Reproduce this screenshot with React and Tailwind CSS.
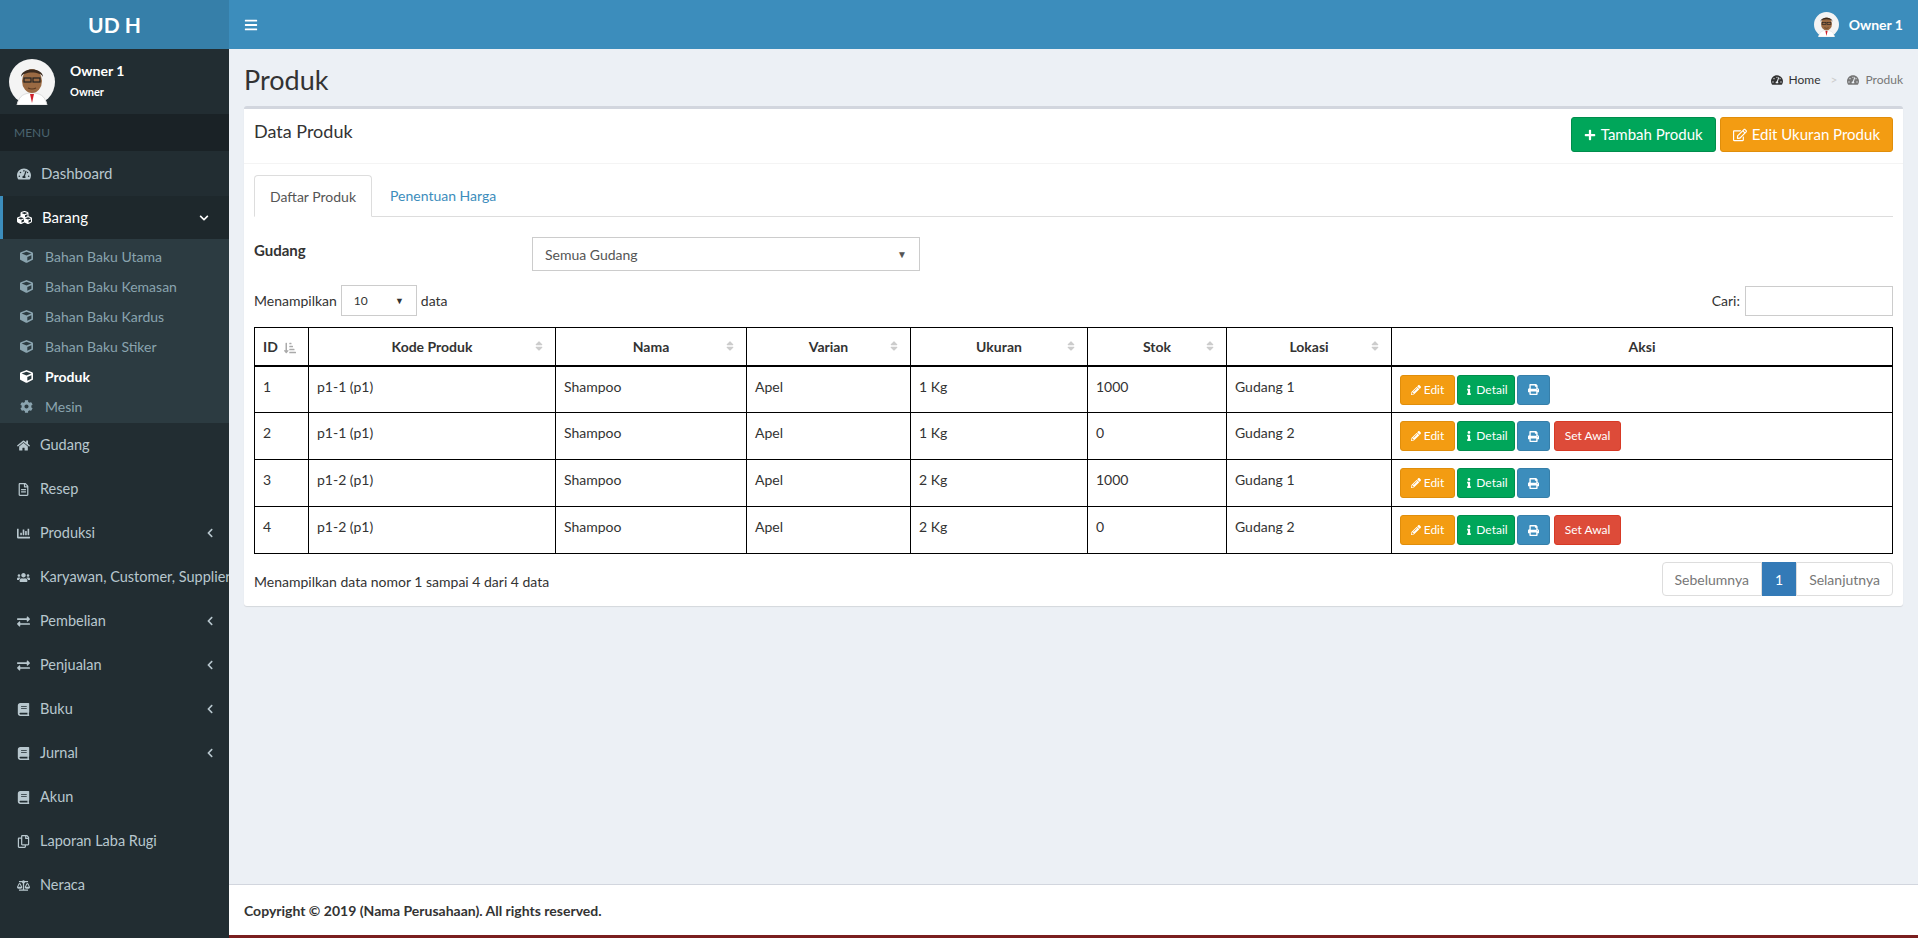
import React from 'react'
import {
  FaTachometerAlt, FaCubes, FaCube, FaCog, FaHome, FaRegFileAlt, FaChartBar, FaUsers,
  FaExchangeAlt, FaBook, FaRegCopy, FaBalanceScale, FaChevronDown, FaChevronLeft,
  FaBars, FaPlus, FaRegEdit, FaPencilAlt, FaInfo, FaPrint, FaSortAmountDownAlt, FaSort,
} from 'react-icons/fa'

function Avatar({ size = 46 }) {
  return (
    <svg width={size} height={size} viewBox="0 0 46 46">
      <circle cx="23" cy="23" r="23" fill="#f4f4f4" />
      <path d="M8 46 C10 36 16 34 23 34 C30 34 36 36 38 46 Z" fill="#fff" stroke="#ddd" />
      <path d="M21 35 L23 44 L25 35 Z" fill="#d0202a" />
      <ellipse cx="23" cy="22" rx="10" ry="12" fill="#9a6a43" />
      <path d="M12 18 C12 8 34 8 34 18 C32 12 14 12 12 18 Z" fill="#3a2a1e" />
      <rect x="15" y="19" width="7" height="4" fill="none" stroke="#222" strokeWidth="1.2" />
      <rect x="24" y="19" width="7" height="4" fill="none" stroke="#222" strokeWidth="1.2" />
      <path d="M19 29 Q23 31 27 29" stroke="#5a3a22" fill="none" strokeWidth="1.2" />
    </svg>
  )
}

const menu = [
  { icon: FaHome, label: 'Gudang' },
  { icon: FaRegFileAlt, label: 'Resep' },
  { icon: FaChartBar, label: 'Produksi', arrow: true },
  { icon: FaUsers, label: 'Karyawan, Customer, Supplier', arrow: true },
  { icon: FaExchangeAlt, label: 'Pembelian', arrow: true },
  { icon: FaExchangeAlt, label: 'Penjualan', arrow: true },
  { icon: FaBook, label: 'Buku', arrow: true },
  { icon: FaBook, label: 'Jurnal', arrow: true },
  { icon: FaBook, label: 'Akun' },
  { icon: FaRegCopy, label: 'Laporan Laba Rugi' },
  { icon: FaBalanceScale, label: 'Neraca' },
]

const sub = ['Bahan Baku Utama', 'Bahan Baku Kemasan', 'Bahan Baku Kardus', 'Bahan Baku Stiker']

const rows = [
  ['1', 'p1-1 (p1)', 'Shampoo', 'Apel', '1 Kg', '1000', 'Gudang 1', false],
  ['2', 'p1-1 (p1)', 'Shampoo', 'Apel', '1 Kg', '0', 'Gudang 2', true],
  ['3', 'p1-2 (p1)', 'Shampoo', 'Apel', '2 Kg', '1000', 'Gudang 1', false],
  ['4', 'p1-2 (p1)', 'Shampoo', 'Apel', '2 Kg', '0', 'Gudang 2', true],
]

const cols = [
  ['ID', 'w-[54px]'], ['Kode Produk', 'w-[247px]'], ['Nama', 'w-[191px]'], ['Varian', 'w-[164px]'],
  ['Ukuran', 'w-[177px]'], ['Stok', 'w-[139px]'], ['Lokasi', 'w-[165px]'],
]

export default function App() {
  return (
    <div className="flex min-h-[938px] w-full text-[#333]" style={{ fontFamily: 'Lato, "Noto Sans", sans-serif' }}>
      {/* Sidebar */}
      <aside className="w-[229px] shrink-0 bg-[#222d32] flex flex-col">
        <div className="h-[49px] bg-[#367fa9] flex items-center justify-center text-white text-[21px] font-bold">UD H</div>
        <div className="h-[65px] flex items-center px-[9px] gap-[15px]">
          <Avatar />
          <div className="text-white font-bold">
            <div className="text-[14px] leading-[18px]">Owner 1</div>
            <div className="text-[11px] mt-[4px]">Owner</div>
          </div>
        </div>
        <div className="h-[37px] bg-[#1a2226] text-[#4b646f] text-[12px] flex items-center px-[14px]">MENU</div>
        <div className="h-[45px] flex items-center gap-[10px] px-[17px] text-[#b8c7ce] text-[15px]">
          <FaTachometerAlt className="text-[14px]" /> Dashboard
        </div>
        <div className="h-[43px] flex items-center gap-[10px] pl-[14px] pr-[20px] text-white text-[15px] bg-[#1e282c] border-l-[3px] border-[#3c8dbc]">
          <FaCubes className="text-[15px]" /> <span className="flex-1">Barang</span>
          <FaChevronDown className="text-[10px]" />
        </div>
        <div className="bg-[#2c3b41] py-[2px]">
          {sub.map(s => (
            <div key={s} className="h-[30px] flex items-center gap-[12px] px-[20px] text-[#8aa4af] text-[14px]">
              <FaCube className="text-[13px]" /> {s}
            </div>
          ))}
          <div className="h-[30px] flex items-center gap-[12px] px-[20px] text-white font-bold text-[14px]">
            <FaCube className="text-[13px]" /> Produk
          </div>
          <div className="h-[30px] flex items-center gap-[12px] px-[20px] text-[#8aa4af] text-[14px]">
            <FaCog className="text-[13px]" /> Mesin
          </div>
        </div>
        {menu.map(m => {
          const Icon = m.icon
          return (
            <div key={m.label} className="h-[44px] flex items-center gap-[10px] pl-[17px] pr-[14px] text-[#b8c7ce] text-[14.5px] whitespace-nowrap">
              <Icon className="text-[13px] shrink-0" /> <span className="flex-1">{m.label}</span>
              {m.arrow && <FaChevronLeft className="text-[10px] shrink-0" />}
            </div>
          )
        })}
      </aside>

      {/* Main */}
      <div className="flex-1 flex flex-col bg-[#ecf0f5] min-w-0">
        <header className="h-[49px] bg-[#3c8dbc] flex items-center justify-between px-[15px] text-white">
          <FaBars className="text-[14px]" />
          <div className="flex items-center gap-[10px] text-[14px] font-bold pr-[0px]">
            <Avatar size={25} /> Owner 1
          </div>
        </header>

        <div className="flex-1 px-[15px]">
          <div className="flex items-center justify-between h-[57px] pt-[5px]">
            <h1 className="text-[27px] pl-[0px]">Produk</h1>
            <div className="flex items-center gap-[6px] text-[12px]">
              <FaTachometerAlt className="text-[12px]" /> <span>Home</span>
              <span className="text-[#ccc] mx-[4px]">&gt;</span>
              <FaTachometerAlt className="text-[12px] text-[#777]" /> <span className="text-[#777]">Produk</span>
            </div>
          </div>

          <div className="bg-white border-t-[3px] border-[#d2d6de] rounded-[3px] shadow-[0_1px_1px_rgba(0,0,0,0.1)]">
            <div className="h-[55px] flex items-start justify-between px-[10px] pt-[8px] border-b border-[#f4f4f4]">
              <div className="text-[18px] pt-[1px]">Data Produk</div>
              <div className="flex gap-[4px]">
                <button className="h-[35px] px-[12px] bg-[#00a65a] border border-[#008d4c] text-white rounded-[3px] text-[15px] flex items-center gap-[5px]">
                  <FaPlus className="text-[12px]" /> Tambah Produk
                </button>
                <button className="h-[35px] px-[12px] bg-[#f39c12] border border-[#e08e0b] text-white rounded-[3px] text-[15px] flex items-center gap-[5px]">
                  <FaRegEdit className="text-[14px]" /> Edit Ukuran Produk
                </button>
              </div>
            </div>

            <div className="px-[10px] pb-[10px]">
              <div className="mt-[11px] flex border-b border-[#ddd] h-[42px]">
                <div className="px-[15px] flex items-center border border-[#ddd] border-b-white -mb-px rounded-t-[4px] bg-white text-[14px] text-[#555]">Daftar Produk</div>
                <div className="px-[18px] flex items-center text-[14px] text-[#3c8dbc]">Penentuan Harga</div>
              </div>

              <div className="flex items-start mt-[20px]">
                <div className="w-[278px] font-bold text-[15px] pt-[2px]">Gudang</div>
                <div className="w-[388px] h-[34px] border border-[#ccc] flex items-center justify-between px-[12px] text-[14px] text-[#555]">
                  Semua Gudang <span className="text-[10px]">▼</span>
                </div>
              </div>

              <div className="flex items-center justify-between mt-[14px]">
                <div className="flex items-center gap-[4px] text-[14px]">
                  Menampilkan
                  <div className="w-[76px] h-[31px] border border-[#ccc] flex items-center justify-between px-[12px] text-[12px]">10 <span className="text-[9px]">▼</span></div>
                  data
                </div>
                <div className="flex items-center gap-[5px] text-[14px]">
                  Cari:
                  <div className="w-[148px] h-[30px] border border-[#ccc]" />
                </div>
              </div>

              <table className="w-full mt-[11px] border-collapse border border-black text-[14px]">
                <thead>
                  <tr className="h-[38px] border-b-2 border-black">
                    {cols.map(([c, w], i) => (
                      <th key={c} className={`${w} border border-black font-bold relative ${i === 0 ? 'text-left pl-[8px]' : 'text-center'}`}>
                        {c}
                        {i === 0
                          ? <FaSortAmountDownAlt className="inline ml-[6px] text-[#aaa] text-[12px]" />
                          : <FaSort className="absolute right-[10px] top-[12px] text-[#ccc] text-[12px]" />}
                      </th>
                    ))}
                    <th className="border border-black font-bold text-center">Aksi</th>
                  </tr>
                </thead>
                <tbody>
                  {rows.map(r => (
                    <tr key={r[0]} className="h-[47px]">
                      {r.slice(0, 7).map((v, i) => (
                        <td key={i} className="border border-black align-top pt-[9px] px-[8px]">{v}</td>
                      ))}
                      <td className="border border-black align-top pt-[8px] px-[8px]">
                        <div className="flex gap-[2px] text-[12px] text-white">
                          <span className="h-[30px] w-[55px] bg-[#f39c12] border border-[#e08e0b] rounded-[3px] flex items-center justify-center gap-[3px]"><FaPencilAlt className="text-[10px]" />Edit</span>
                          <span className="h-[30px] w-[58px] bg-[#00a65a] border border-[#008d4c] rounded-[3px] flex items-center justify-center gap-[2px]"><FaInfo className="text-[10px]" />Detail</span>
                          <span className="h-[30px] w-[33px] bg-[#3c8dbc] border border-[#367fa9] rounded-[3px] flex items-center justify-center"><FaPrint className="text-[11px]" /></span>
                          {r[7] && <span className="h-[30px] w-[67px] ml-[2px] bg-[#dd4b39] border border-[#d73925] rounded-[3px] flex items-center justify-center">Set Awal</span>}
                        </div>
                      </td>
                    </tr>
                  ))}
                </tbody>
              </table>

              <div className="flex items-start justify-between mt-[8px]">
                <div className="text-[14px] pt-[9px]">Menampilkan data nomor 1 sampai 4 dari 4 data</div>
                <div className="flex text-[14px] h-[34px]">
                  <span className="px-[12px] flex items-center border border-[#ddd] rounded-l-[4px] text-[#777]">Sebelumnya</span>
                  <span className="px-[12px] flex items-center bg-[#337ab7] border border-[#337ab7] text-white">1</span>
                  <span className="px-[12px] flex items-center border border-[#ddd] rounded-r-[4px] text-[#777]">Selanjutnya</span>
                </div>
              </div>
            </div>
          </div>
        </div>

        <footer className="h-[54px] bg-white border-t border-[#d2d6de] border-b-[3px] border-b-[#7a1f1f] flex items-center px-[15px] text-[14px] font-bold">
          Copyright © 2019 (Nama Perusahaan). All rights reserved.
        </footer>
      </div>
    </div>
  )
}
